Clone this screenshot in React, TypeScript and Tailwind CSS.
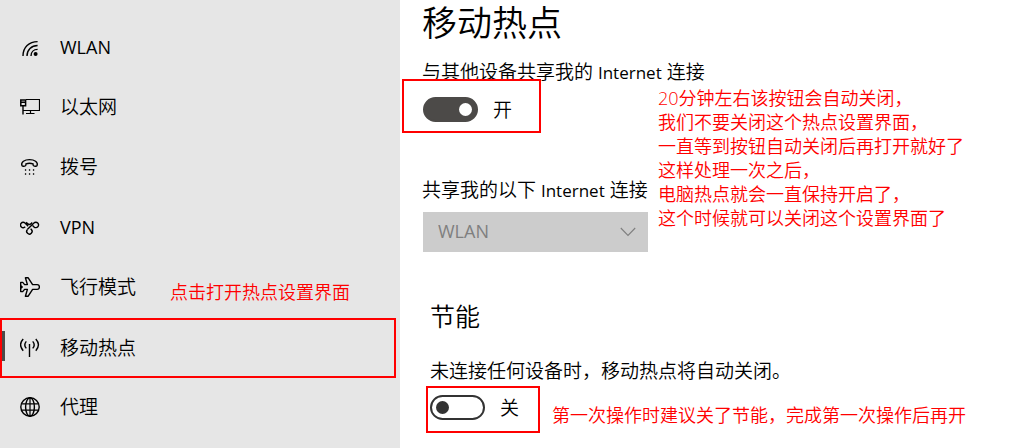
import { useState, type ReactNode } from "react";

function Icon({ children }: { children: ReactNode }) {
  return (
    <svg
      viewBox="0 0 20 20"
      className="size-5 shrink-0"
      fill="none"
      stroke="currentColor"
      strokeWidth="1.4"
      aria-hidden="true"
    >
      {children}
    </svg>
  );
}

const icons = {
  wlan: (
    <Icon>
      <path d="M3 19C3 10.5 9 4.6 17.6 4.6M7 19C7 12.8 11.4 8.5 17.6 8.5M11 19C11 15 13.8 12.4 17.6 12.4" />
      <circle cx="15.6" cy="17" r="2" fill="currentColor" stroke="none" />
    </Icon>
  ),
  ethernet: (
    <Icon>
      <path d="M6 2.5H19.5V13.5H3M10.5 13.5V16.5M6 16.5H14.5" strokeWidth="1.2" />
      <path d="M.8 3H5.6V8.8H.8ZM1 5.2H5.4" strokeWidth="1.5" />
      <path d="M3 9V17.5" />
    </Icon>
  ),
  dial: (
    <Icon>
      <path d="M1.8 8.2C1 5 4.4 2.6 9.5 2.6S18 5 17.2 8.2C17 9.2 16.2 9.4 15.2 9.2L13.8 8.9C13 8.7 13 8.1 13 6.8C11 6.1 8 6.1 6 6.8C6 8.1 6 8.7 5.2 8.9L3.8 9.2C2.8 9.4 2 9.2 1.8 8.2Z" />
      <path d="M4.9 13h1.3M8.9 13h1.3M12.9 13h1.3M4.9 17h1.3M8.9 17h1.3M12.9 17h1.3" />
    </Icon>
  ),
  vpn: (
    <Icon>
      <path d="M5.2 9.8A2.7 2.7 0 1 1 5 6L8.2 9.2M6.2 5.2L7.9 6.9Q9.4 8.1 10.9 6.9L12.2 5.6" />
      <path d="M7.3 12.6L13.9 6.1A2.7 2.7 0 1 1 14 9.9L12.6 8.6" />
      <path d="M7.3 12.6A2.7 2.7 0 1 0 11.4 12.5L10.6 11.7" />
    </Icon>
  ),
  plane: (
    <Icon>
      <path
        d="M5.4 .8H8.2L12.6 7.6H17.2C18.6 7.6 19.4 8.8 19.4 10S18.6 12.4 17.2 12.4H12.6L8.2 19.2H5.4L7.4 12.4H4.6L2.7 14.6H.7V5.4H2.7L4.6 7.6H7.4ZM.7 8.4L2.2 10L.7 11.6"
        strokeLinejoin="round"
      />
    </Icon>
  ),
  hotspot: (
    <Icon>
      <path d="M3.2 1C-.1 4.6-.1 9 3.2 12.8M6.3 3.4C4.4 5.6 4.4 8.2 6.3 10.4M15.8 1C19.1 4.6 19.1 9 15.8 12.8M12.7 3.4C14.6 5.6 14.6 8.2 12.7 10.4" />
      <path d="M9.5 6V19" />
    </Icon>
  ),
  proxy: (
    <Icon>
      <circle cx="10" cy="10" r="9.2" />
      <ellipse cx="10" cy="10" rx="4.4" ry="9.2" />
      <path d="M10 .8V19.2M1.8 6.8H18.2M1.8 13.2H18.2" strokeWidth="1.2" />
    </Icon>
  ),
};

const items: { label: string; icon: ReactNode; note?: string; active?: boolean }[] = [
  { label: "WLAN", icon: icons.wlan },
  { label: "以太网", icon: icons.ethernet },
  { label: "拨号", icon: icons.dial },
  { label: "VPN", icon: icons.vpn },
  { label: "飞行模式", icon: icons.plane, note: "点击打开热点设置界面" },
  { label: "移动热点", icon: icons.hotspot, active: true },
  { label: "代理", icon: icons.proxy },
];

const steps = [
  "20分钟左右该按钮会自动关闭，",
  "我们不要关闭这个热点设置界面，",
  "一直等到按钮自动关闭后再打开就好了",
  "这样处理一次之后，",
  "电脑热点就会一直保持开启了，",
  "这个时候就可以关闭这个设置界面了",
];

function Latin({ children }: { children: string }) {
  return <span className="text-[17px] leading-5 font-normal">{children}</span>;
}

function Toggle({ initial, label }: { initial: boolean; label: string }) {
  const [on, setOn] = useState(initial);
  return (
    <label className="flex items-center gap-[15px]">
      <input
        type="checkbox"
        role="switch"
        aria-label={label}
        checked={on}
        onChange={(e) => setOn(e.target.checked)}
        className="flex h-[25px] w-[55px] shrink-0 appearance-none items-center rounded-full border-2 border-[#333] px-1 before:size-[13px] before:rounded-full before:bg-[#333] checked:justify-end checked:border-[#4c4a48] checked:bg-[#4c4a48] checked:before:bg-white"
      />
      <span>{on ? "开" : "关"}</span>
    </label>
  );
}

export default function App() {
  return (
    <div className="flex min-h-screen bg-white font-['Open_Sans','Noto_Sans_CJK_SC',sans-serif] text-[19px] leading-6 font-[350] text-black">
      <nav className="w-[400px] shrink-0 bg-[#e6e6e6] pt-[18px] pr-1">
        <ul>
          {items.map((item) => (
            <li
              key={item.label}
              className={
                item.active
                  ? "flex h-[60px] items-center border-2 border-[#f00]"
                  : "flex h-[60px] items-center pb-[2px] pl-5"
              }
            >
              {item.active && <span className="mr-[15px] mb-1 h-[30px] w-[3px] bg-[#4c4a48]" />}
              <a href="#" className="flex items-center gap-5">
                {item.icon}
                {/^[A-Z]+$/.test(item.label) ? (
                  <span className="text-lg leading-6 font-normal">{item.label}</span>
                ) : (
                  <span>{item.label}</span>
                )}
              </a>
              {item.note && <p className="mt-[10px] ml-[34px] text-lg leading-6 text-[#f00]">{item.note}</p>}
            </li>
          ))}
        </ul>
      </nav>

      <main className="min-w-0 flex-1 pt-px pl-[2px]">
        <h1 className="pl-5 text-[35px] leading-[44px]">移动热点</h1>
        <p className="mt-[15px] pl-5 whitespace-nowrap">
          与其他设备共享我的 <Latin>Internet</Latin> 连接
        </p>

        <div className="-mt-[5px] flex">
          <div className="w-64 shrink-0">
            <div className="w-[139px] border-2 border-[#f00] pt-4 pb-[9px] pl-[19px]">
              <Toggle initial label="与其他设备共享我的 Internet 连接" />
            </div>
            <label htmlFor="source" className="mt-[45px] block pl-5 whitespace-nowrap">
              共享我的以下 <Latin>Internet</Latin> 连接
            </label>
            <div className="mt-[10px] ml-[21px] grid h-10 w-[225px] items-center bg-[#ccc] text-[#7f7f7f]">
              <select
                id="source"
                disabled
                className="col-start-1 row-start-1 h-10 w-full appearance-none px-[15px] pb-[2px] text-lg leading-6 font-normal opacity-100"
              >
                <option>WLAN</option>
              </select>
              <svg
                viewBox="0 0 16 10"
                className="col-start-1 row-start-1 mr-3 h-[10px] w-4 justify-self-end"
                fill="none"
                stroke="currentColor"
                strokeWidth="1.1"
                aria-hidden="true"
              >
                <path d="M.8 1L8 8.4L15.2 1" />
              </svg>
            </div>
          </div>
          <div className="pt-[7px] text-lg leading-6 whitespace-nowrap text-[#f00]">
            {steps.map((s) => (
              <p key={s}>{s}</p>
            ))}
          </div>
        </div>

        <h2 className="mt-12 pl-7 text-[25px] leading-8">节能</h2>
        <p className="mt-[27px] pl-7 whitespace-nowrap">未连接任何设备时，移动热点将自动关闭。</p>
        <div className="mt-[3px] ml-6 flex items-center gap-3">
          <div className="w-[114px] shrink-0 border-2 border-[#f00] pt-[7px] pb-[11px] pl-[2px]">
            <Toggle initial={false} label="节能" />
          </div>
          <p className="mt-[10px] text-lg leading-6 whitespace-nowrap text-[#f00]">
            第一次操作时建议关了节能，完成第一次操作后再开
          </p>
        </div>
      </main>
    </div>
  );
}
